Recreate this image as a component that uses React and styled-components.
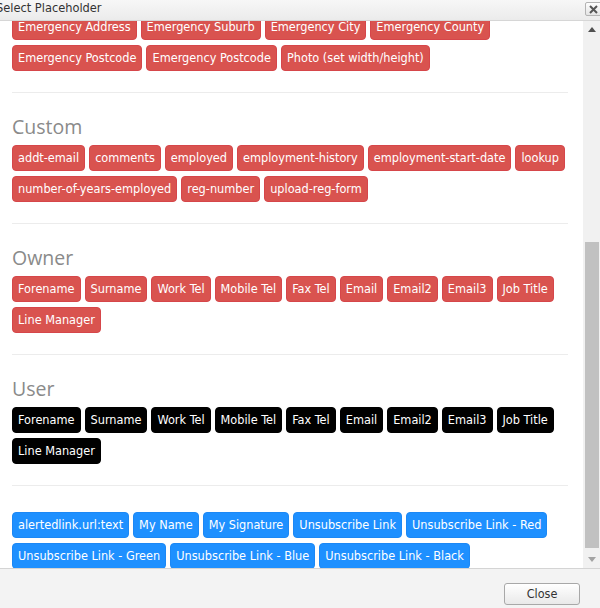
import React, { useLayoutEffect, useRef } from "react";
import styled, { createGlobalStyle } from "styled-components";

const GlobalStyle = createGlobalStyle`
  html, body {
    margin: 0;
    padding: 0;
    width: 600px;
    height: 608px;
    overflow: hidden;
    background: #fff;
  }
  body {
    font-family: "DejaVu Sans Condensed", "DejaVu Sans", Verdana, sans-serif;
    font-stretch: semi-condensed;
  }
  * { box-sizing: border-box; }
`;

const Dialog = styled.div`
  width: 600px;
  height: 608px;
  display: flex;
  flex-direction: column;
  background: #fff;
  overflow: hidden;
`;

const TitleBar = styled.div`
  position: relative;
  flex: 0 0 21px;
  background: linear-gradient(#f7f7f7, #ebebeb);
  border-bottom: 1px solid #d6d6d6;
  display: flex;
  align-items: flex-start;
`;

const Title = styled.span`
  font-size: 12.7px;
  line-height: 16px;
  color: #333;
  margin-left: -4px;
  white-space: nowrap;
`;

const TitleClose = styled.button`
  position: absolute;
  top: 2px;
  right: -2px;
  width: 17px;
  height: 14px;
  padding: 0;
  border: 1px solid #b3b3b3;
  border-radius: 2px;
  background: linear-gradient(#fdfdfd, #e4e4e4);
  display: flex;
  align-items: center;
  justify-content: center;
`;

const Body = styled.div`
  flex: 1 1 auto;
  min-height: 0;
  display: flex;
`;

const Viewport = styled.div`
  flex: 1 1 auto;
  overflow: hidden;
  padding: 0 13px 0 12px;
`;

const Section = styled.div`
  padding: 26px 0 ${(p) => (p.$last ? "0" : "21px")};
`;

const Divider = styled.div`
  height: 1px;
  margin-right: 2px;
  background: #ececec;
`;

const Heading = styled.h3`
  margin: 0 0 10px;
  height: 16px;
  font-family: "Open Sans", "Noto Sans", sans-serif;
  font-stretch: normal;
  font-size: 19.5px;
  font-weight: 400;
  line-height: 16px;
  color: #8a8a8a;
`;

const TagList = styled.div`
  display: flex;
  flex-wrap: wrap;
  gap: 5px 4px;
`;

const palette = {
  red: { bg: "#d9534f", border: "#d6464a" },
  black: { bg: "#000000", border: "#000000" },
  blue: { bg: "#1e90ff", border: "#1c88f5" },
};

const Tag = styled.span`
  display: inline-block;
  padding: 4px 5px;
  border: 1px solid ${(p) => palette[p.$tone].border};
  border-radius: 4px;
  background: ${(p) => palette[p.$tone].bg};
  color: #fff;
  font-size: 12.6px;
  line-height: 16px;
  white-space: nowrap;
  cursor: pointer;
`;

const ScrollBar = styled.div`
  flex: 0 0 17px;
  display: flex;
  flex-direction: column;
  background: #f1f1f1;
`;

const ArrowButton = styled.div`
  flex: 0 0 17px;
  display: flex;
  align-items: center;
  justify-content: center;
  padding-left: 1px;
`;

const Track = styled.div`
  flex: 1 1 auto;
  display: flex;
  flex-direction: column;
  justify-content: flex-end;
  padding: 0 1px 3px 2px;
`;

const Thumb = styled.div`
  height: 306px;
  background: #c1c1c1;
`;

const Footer = styled.div`
  flex: 0 0 40px;
  border-top: 1px solid #d4d4d4;
  background: #f3f3f3;
  display: flex;
  justify-content: flex-end;
  align-items: flex-start;
  padding: 14px 20px 0 0;
`;

const CloseButton = styled.button`
  width: 76px;
  height: 22px;
  padding: 0;
  border: 1px solid #a8a8a8;
  border-radius: 3px;
  background: linear-gradient(#ffffff, #e9e9e9);
  box-shadow: inset 0 1px 0 #fff;
  font-family: "DejaVu Sans Condensed", "DejaVu Sans", Verdana, sans-serif;
  font-stretch: semi-condensed;
  font-size: 12.5px;
  line-height: 20px;
  color: #333;
`;

const sections = [
  {
    title: "Emergency",
    tone: "red",
    items: [
      "Emergency Name",
      "Emergency Relationship",
      "Emergency Tel",
      "Emergency Mobile",
      "Emergency Address",
      "Emergency Suburb",
      "Emergency City",
      "Emergency County",
      "Emergency Postcode",
      "Emergency Postcode",
      "Photo (set width/height)",
    ],
  },
  {
    title: "Custom",
    tone: "red",
    items: [
      "addt-email",
      "comments",
      "employed",
      "employment-history",
      "employment-start-date",
      "lookup",
      "number-of-years-employed",
      "reg-number",
      "upload-reg-form",
    ],
  },
  {
    title: "Owner",
    tone: "red",
    items: [
      "Forename",
      "Surname",
      "Work Tel",
      "Mobile Tel",
      "Fax Tel",
      "Email",
      "Email2",
      "Email3",
      "Job Title",
      "Line Manager",
    ],
  },
  {
    title: "User",
    tone: "black",
    items: [
      "Forename",
      "Surname",
      "Work Tel",
      "Mobile Tel",
      "Fax Tel",
      "Email",
      "Email2",
      "Email3",
      "Job Title",
      "Line Manager",
    ],
  },
  {
    title: null,
    tone: "blue",
    items: [
      "alertedlink.url:text",
      "My Name",
      "My Signature",
      "Unsubscribe Link",
      "Unsubscribe Link - Red",
      "Unsubscribe Link - Green",
      "Unsubscribe Link - Blue",
      "Unsubscribe Link - Black",
    ],
  },
];

const Triangle = ({ up, color }) => (
  <svg width="8" height="5" viewBox="0 0 8 5">
    <polygon points={up ? "0,5 8,5 4,0" : "0,0 8,0 4,5"} fill={color} />
  </svg>
);

export default function App() {
  const viewRef = useRef(null);

  useLayoutEffect(() => {
    const el = viewRef.current;
    if (el) el.scrollTop = el.scrollHeight - el.clientHeight - 1;
  }, []);

  return (
    <>
      <GlobalStyle />
      <Dialog>
        <TitleBar>
          <Title>Select Placeholder</Title>
          <TitleClose aria-label="close">
            <svg width="9" height="9" viewBox="0 0 9 9">
              <path d="M1 1 L8 8 M8 1 L1 8" stroke="#555" strokeWidth="2" />
            </svg>
          </TitleClose>
        </TitleBar>
        <Body>
          <Viewport ref={viewRef}>
            {sections.map((s, i) => (
              <React.Fragment key={i}>
                {i > 0 && <Divider />}
                <Section $last={i === sections.length - 1}>
                  {s.title && <Heading>{s.title}</Heading>}
                  <TagList>
                    {s.items.map((it, j) => (
                      <Tag key={j} $tone={s.tone}>
                        {it}
                      </Tag>
                    ))}
                  </TagList>
                </Section>
              </React.Fragment>
            ))}
          </Viewport>
          <ScrollBar>
            <ArrowButton>
              <Triangle up color="#505050" />
            </ArrowButton>
            <Track>
              <Thumb />
            </Track>
            <ArrowButton>
              <Triangle color="#a3a3a3" />
            </ArrowButton>
          </ScrollBar>
        </Body>
        <Footer>
          <CloseButton>Close</CloseButton>
        </Footer>
      </Dialog>
    </>
  );
}
